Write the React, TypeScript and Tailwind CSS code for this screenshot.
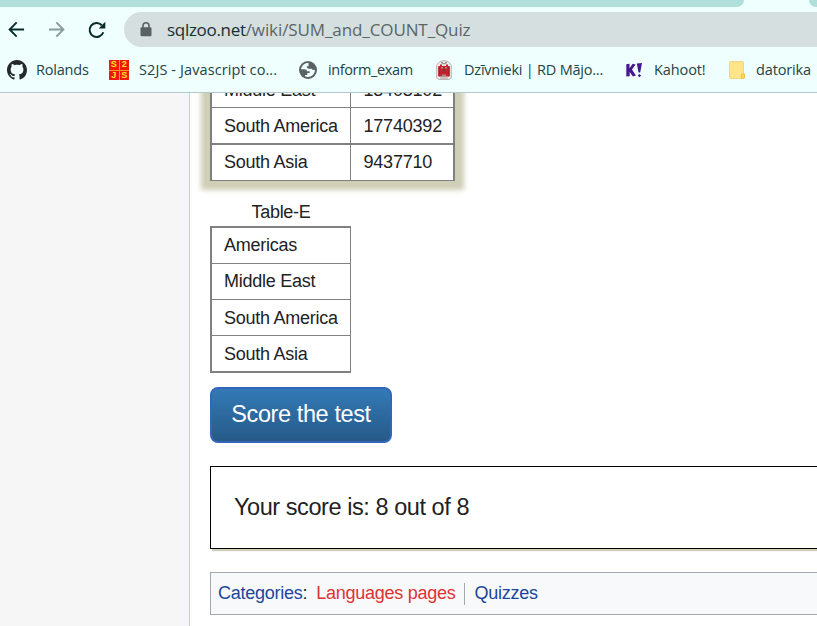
import { ReactNode } from "react";

function BackIcon({ className }: { className: string }) {
  return (
    <svg className={className} viewBox="0 0 18 18" fill="none" stroke="currentColor" strokeWidth="2">
      <path d="M17 9H2M9.2 1.5L1.7 9l7.5 7.5" />
    </svg>
  );
}

function ReloadIcon() {
  return (
    <svg className="ml-[23px] h-[18px] w-[18px] shrink-0 text-[#082b2b]" viewBox="0 0 18 18">
      <path d="M15.3 11.2A7 7 0 1 1 13.8 4.2" fill="none" stroke="currentColor" strokeWidth="2" />
      <path d="M17.3 .8V7.4H10.7Z" fill="currentColor" />
    </svg>
  );
}

function LockIcon() {
  return (
    <svg className="h-[15px] w-[12px] shrink-0" viewBox="0 0 12 15">
      <path d="M3 6V3.8a3 3 0 0 1 6 0V6" fill="none" stroke="#5b6163" strokeWidth="1.6" />
      <rect x=".5" y="5.2" width="11" height="9" rx="1.2" fill="#5b6163" />
    </svg>
  );
}

function GithubIcon() {
  return (
    <svg className="h-5 w-5 shrink-0" viewBox="0 0 16 16" fill="#24292e">
      <path d="M8 0C3.58 0 0 3.58 0 8c0 3.54 2.29 6.53 5.47 7.59.4.07.55-.17.55-.38 0-.19-.01-.82-.01-1.49-2.01.37-2.53-.49-2.69-.94-.09-.23-.48-.94-.82-1.13-.28-.15-.68-.52-.01-.53.63-.01 1.08.58 1.23.82.72 1.21 1.87.87 2.33.66.07-.52.28-.87.51-1.07-1.78-.2-3.64-.89-3.64-3.95 0-.87.31-1.59.82-2.15-.08-.2-.36-1.02.08-2.12 0 0 .67-.21 2.2.82.64-.18 1.32-.27 2-.27s1.36.09 2 .27c1.53-1.04 2.2-.82 2.2-.82.44 1.1.16 1.92.08 2.12.51.56.82 1.27.82 2.15 0 3.07-1.87 3.75-3.65 3.95.29.25.54.73.54 1.48 0 1.07-.01 1.93-.01 2.2 0 .21.15.46.55.38A8.01 8.01 0 0 0 16 8c0-4.42-3.58-8-8-8z" />
    </svg>
  );
}

function S2jsIcon() {
  return (
    <span className="grid h-5 w-5 shrink-0 grid-cols-2 gap-px bg-[#f2a01c] text-center font-['Liberation_Sans',sans-serif] text-[9px] leading-[9.5px] font-bold text-[#ffe928]">
      <span className="bg-[#f01808]">S</span>
      <span className="bg-[#f01808]">2</span>
      <span className="bg-[#f01808]">J</span>
      <span className="bg-[#f01808]">S</span>
    </span>
  );
}

function GlobeIcon() {
  return (
    <svg className="h-[18px] w-[18px] shrink-0" viewBox="0 0 18 18">
      <circle cx="9" cy="9" r="9" fill="#5a6266" />
      <path
        d="M9.5 2.1C5.7 1.9 2.5 4.7 2.1 8.3H5.5C7 8.3 7.8 9 8.1 10.3H10.7V12H8.3V14H6V15.3A7 7 0 0 0 15.9 8.4C14.7 9.3 13.3 9 12.7 7.7H10C8.5 7.7 7.7 6.7 7.7 5.3H9.5Z"
        fill="#effefe"
      />
    </svg>
  );
}

function CrestIcon() {
  return (
    <svg className="h-5 w-4 shrink-0" viewBox="0 0 16 20">
      <path d="M4 1.5Q8-.5 12 1.5L15.3 5V18L13 19.5H3L.7 18V5Z" fill="#f0eeec" stroke="#aaa5a3" strokeWidth=".8" />
      <path d="M2.3 6H4V4.5H6V6H10V4.5H12V6H13.7V16.5H2.3Z" fill="#c8202d" />
      <path d="M3 7V16M13 7V16" stroke="#a11c28" strokeWidth="1" />
      <path d="M5 2.2H7V3.3H5ZM9 2.2H11V3.3H9ZM6.5 3.2H9.5V4.2H6.5Z" fill="#777270" />
      <path d="M5 7H7V8.5H5ZM9 7H11V8.5H9ZM6 14.5H10V16.5H6Z" fill="#a79187" />
      <path d="M8 8V13M6 10.5H10" stroke="#7c3730" />
      <path d="M4 18H12" stroke="#8d8784" strokeWidth=".8" />
    </svg>
  );
}

function KahootIcon() {
  return (
    <svg className="h-[15px] w-4 shrink-0" viewBox="0 0 16 15" fill="#46178f">
      <path d="M.3 1.2 3.5.8V5.3L6.7.8 9.6 1.4 6 6.5 9.9 12.5 6.9 13.5 3.7 9V13.3L.3 13.6Z" />
      <path d="M10.8.5 16 .1 14.2 9.5H12.5ZM13.4 10.9 15.1 12.6 13.4 14.3 11.7 12.6Z" />
    </svg>
  );
}

function FolderIcon() {
  return (
    <svg className="h-[18px] w-4 shrink-0" viewBox="0 0 16 18">
      <path d="M1.5.5H13.5Q14.5.5 14.5 1.5V12.5L15.5 13V16.5Q15.5 17.5 14.5 17.5H1.5Q.5 17.5.5 16.5V1.5Q.5.5 1.5.5Z" fill="#ffe48c" stroke="#efd06b" strokeWidth=".8" />
      <path d="M12.3 17.5V14Q12.3 12.5 13.8 12.5L15.5 13V16.5Q15.5 17.5 14.5 17.5Z" fill="#f8d567" stroke="#e6bc48" strokeWidth=".8" />
    </svg>
  );
}

function Bookmark({ icon, label, box, gap, tracking }: { icon: ReactNode; label: string; box: string; gap: string; tracking: string }) {
  return (
    <div className={`flex h-full shrink-0 items-center ${box} ${gap}`}>
      {icon}
      <span className={`whitespace-nowrap ${tracking}`}>{label}</span>
    </div>
  );
}

function Browser() {
  return (
    <header className="h-[93px] shrink-0 overflow-hidden border-b border-[#b3c8c9] bg-[#effffe] font-['Open_Sans','Noto_Sans',sans-serif]">
      <div className="flex h-[7px] justify-between">
        <div className="w-[744px] rounded-br-[7px] bg-[#b1e0dc]" />
        <div className="w-2 rounded-bl-[7px] bg-[#b1e0dc]" />
      </div>
      <div className="flex h-[45px] items-center pl-2">
        <BackIcon className="h-[17px] w-[17px] shrink-0 text-[#082b2b]" />
        <BackIcon className="ml-[23px] h-[17px] w-[17px] shrink-0 rotate-180 text-[#879c9d]" />
        <ReloadIcon />
        <div className="ml-[18px] flex h-[35px] flex-1 items-center rounded-l-full bg-[#d5dfdf] pl-4 text-[17px] text-[#596668]">
          <LockIcon />
          <span className="ml-[15px] whitespace-nowrap tracking-[-0.1px]">
            <span className="tracking-[-0.3px] text-[#142f31]">sqlzoo.net</span>/wiki/SUM_and_COUNT_Quiz
          </span>
        </div>
      </div>
      <nav className="flex h-9 items-center pl-[7px] text-[14.5px] text-[#234345]">
        <Bookmark icon={<GithubIcon />} label="Rolands" box="w-[102px]" gap="gap-[9px]" tracking="tracking-[-0.2px]" />
        <Bookmark icon={<S2jsIcon />} label="S2JS - Javascript co..." box="w-[190px]" gap="gap-[10px]" tracking="tracking-[0.1px]" />
        <Bookmark icon={<GlobeIcon />} label="inform_exam" box="w-[137px]" gap="gap-[11px]" tracking="tracking-[-0.4px]" />
        <Bookmark icon={<CrestIcon />} label="Dzīvnieki | RD Mājo..." box="w-[190px]" gap="gap-3" tracking="tracking-[-0.22px]" />
        <Bookmark icon={<KahootIcon />} label="Kahoot!" box="w-[103px]" gap="gap-3" tracking="tracking-[-0.1px]" />
        <Bookmark icon={<FolderIcon />} label="datorika" box="w-[90px]" gap="gap-[11px]" tracking="tracking-[-0.15px]" />
      </nav>
    </header>
  );
}

const totals = [
  ["Middle East", "13403102"],
  ["South America", "17740392"],
  ["South Asia", "9437710"],
];
const regions = ["Americas", "Middle East", "South America", "South Asia"];

export default function App() {
  return (
    <div className="flex h-[626px] w-full flex-col overflow-hidden bg-white">
      <Browser />
      <div className="flex min-h-0 flex-1 overflow-hidden">
        <aside className="w-[189px] shrink-0 bg-[#f6f6f6]" />
        <main className="min-w-0 flex-1 overflow-hidden border-l border-[#add8e6] pl-5 font-['Liberation_Sans',sans-serif] text-[18px] tracking-[-0.26px] text-[#222]">
          <div className="-mt-[22px] h-[110px] w-[245px] border-x-2 border-b border-[#808080] bg-white shadow-[0_0_5px_9px_#cfcfb7]">
            {totals.map(([name, total], i) => (
              <div key={name} className={`flex border-[#808080] ${i === 0 ? "h-[37px] border-b pt-[2px]" : i === 1 ? "h-9 border-b" : "h-9 border-t"}`}>
                <div className={`flex w-[139px] items-center border-r border-[#808080] pl-3 ${i === 1 ? "pt-[2px]" : ""}`}>{name}</div>
                <div className={`flex items-center pl-[12.5px] tracking-[-0.2px] ${i === 1 ? "pt-[2px]" : ""}`}>{total}</div>
              </div>
            ))}
          </div>
          <div className="mt-[19px] w-[142px] text-center leading-6">Table-E</div>
          <div className="mt-[2px] h-[147px] w-[141px] border-y-2 border-r border-l-2 border-[#808080]">
            {regions.map((name, i) => (
              <div key={name} className={`flex h-9 items-center border-b border-[#808080] pl-3 last:h-[35px] last:border-b-0 ${i > 1 ? "pt-[2px]" : ""}`}>
                {name}
              </div>
            ))}
          </div>
          <button className="mt-[14px] flex h-14 w-[182px] items-center justify-center rounded-[8px] border-2 border-[#3366bb] bg-linear-to-b from-[#337ab7] to-[#265a88] text-[23.5px] tracking-[-0.4px] text-white">
            Score the test
          </button>
          <section className="mt-[23px] flex h-[83px] w-[700px] items-center border border-black pl-[23px] text-[23.5px] tracking-[-0.44px] shadow-[2px_2px_1px_#cfcfb7]">
            Your score is: 8 out of 8
          </section>
          <footer className="mt-[23px] flex h-[43px] w-[700px] items-center border border-[#a2a9b1] bg-[#f8f9fa] pl-[7px] text-[#1c469b]">
            <span>Categories<span className="text-[#222]">:</span></span>
            <span className="ml-[9px] text-[#d33]">Languages pages</span>
            <span className="ml-[9px] h-[22px] border-l border-[#a2a9b1]" />
            <span className="ml-[9px]">Quizzes</span>
          </footer>
        </main>
      </div>
    </div>
  );
}
